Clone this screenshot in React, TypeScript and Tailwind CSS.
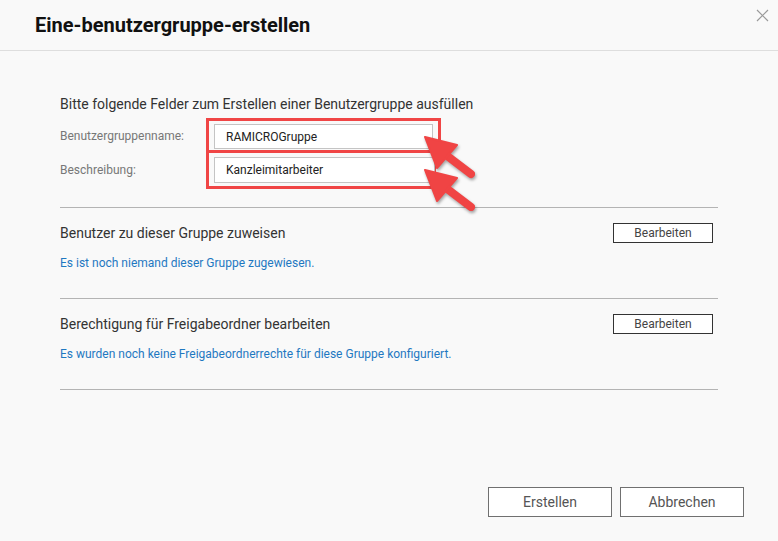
import React from "react";

function Arrow({ dy }: { dy: number }) {
  return (
    <g transform={`translate(0 ${dy})`}>
      <line x1="446" y1="155" x2="471" y2="174" stroke="#f04444" strokeWidth="8" strokeLinecap="round" />
      <polygon points="425,137 457,145 437,168" fill="#f04444" stroke="#f04444" strokeWidth="2" strokeLinejoin="round" />
    </g>
  );
}

function Section({ title, text }: { title: string; text: string }) {
  return (
    <div className="border-t border-[#b4b4b4] pt-[15px] pb-[27px]">
      <div className="flex h-[20px] items-center justify-between">
        <span className="text-[14px] leading-[20px] text-[#333]">{title}</span>
        <button className="mr-[5px] h-[20px] w-[100px] border border-[#333] bg-white text-[12px] leading-[18px] text-[#444]">
          Bearbeiten
        </button>
      </div>
      <div className="mt-[12px] text-[12px] leading-[16px] text-[#1f78c1]">{text}</div>
    </div>
  );
}

export default function App() {
  return (
    <div
      className="relative flex h-[541px] w-[778px] flex-col overflow-hidden bg-[#f9f9f9]"
      style={{ fontFamily: "Roboto, 'Liberation Sans', sans-serif" }}
    >
      <div className="flex h-[51px] shrink-0 items-center border-b border-[#dedede] px-[35px]">
        <h1 className="text-[20px] font-bold leading-[26px] text-[#111]">Eine-benutzergruppe-erstellen</h1>
      </div>
      <svg className="absolute left-[756px] top-[9px]" width="13" height="13" viewBox="0 0 13 13">
        <path d="M1 1 L12 12 M12 1 L1 12" stroke="#9a9a9a" strokeWidth="1.2" />
      </svg>

      <div className="flex flex-col px-[60px] pt-[43px]">
        <div className="text-[14px] leading-[20px] text-[#333]">
          Bitte folgende Felder zum Erstellen einer Benutzergruppe ausfüllen
        </div>
        <div className="mt-[4px] flex flex-col">
          <div className="flex items-center">
            <span className="w-[146px] text-[12px] leading-[16px] text-[#777]">Benutzergruppenname:</span>
            <div className="h-[35px] w-[235px] border-[3px] border-[#f04545] pl-[5px] pr-[5px] pt-[3px]">
              <div className="flex h-[25px] items-center border border-[#c4c4c4] bg-white pl-[11px] text-[12px] text-[#222]">
                RAMICROGruppe
              </div>
            </div>
          </div>
          <div className="-mt-[3px] flex items-center">
            <span className="w-[146px] text-[12px] leading-[16px] text-[#777]">Beschreibung:</span>
            <div className="h-[39px] w-[230px] border-[3px] border-[#f04545] pl-[5px] pt-[4px]">
              <div className="flex h-[26px] w-[221px] items-center border border-[#c4c4c4] bg-white pl-[11px] text-[12px] text-[#222]">
                Kanzleimitarbeiter
              </div>
            </div>
          </div>
        </div>
        <div className="mt-[18px]">
          <Section title="Benutzer zu dieser Gruppe zuweisen" text="Es ist noch niemand dieser Gruppe zugewiesen." />
          <Section
            title="Berechtigung für Freigabeordner bearbeiten"
            text="Es wurden noch keine Freigabeordnerrechte für diese Gruppe konfiguriert."
          />
          <div className="border-t border-[#b4b4b4]" />
        </div>
      </div>

      <div className="mt-auto flex justify-end gap-[8px] pb-[24px] pr-[34px]">
        <button className="h-[30px] w-[124px] border border-[#707070] bg-white text-[14px] text-[#555]">Erstellen</button>
        <button className="h-[30px] w-[124px] border border-[#707070] bg-white text-[14px] text-[#555]">Abbrechen</button>
      </div>

      <svg
        className="pointer-events-none absolute left-0 top-0"
        width="778"
        height="541"
        style={{ filter: "drop-shadow(1px 2px 1.5px rgba(0,0,0,0.35))" }}
      >
        <Arrow dy={0} />
        <Arrow dy={33} />
      </svg>
    </div>
  );
}
